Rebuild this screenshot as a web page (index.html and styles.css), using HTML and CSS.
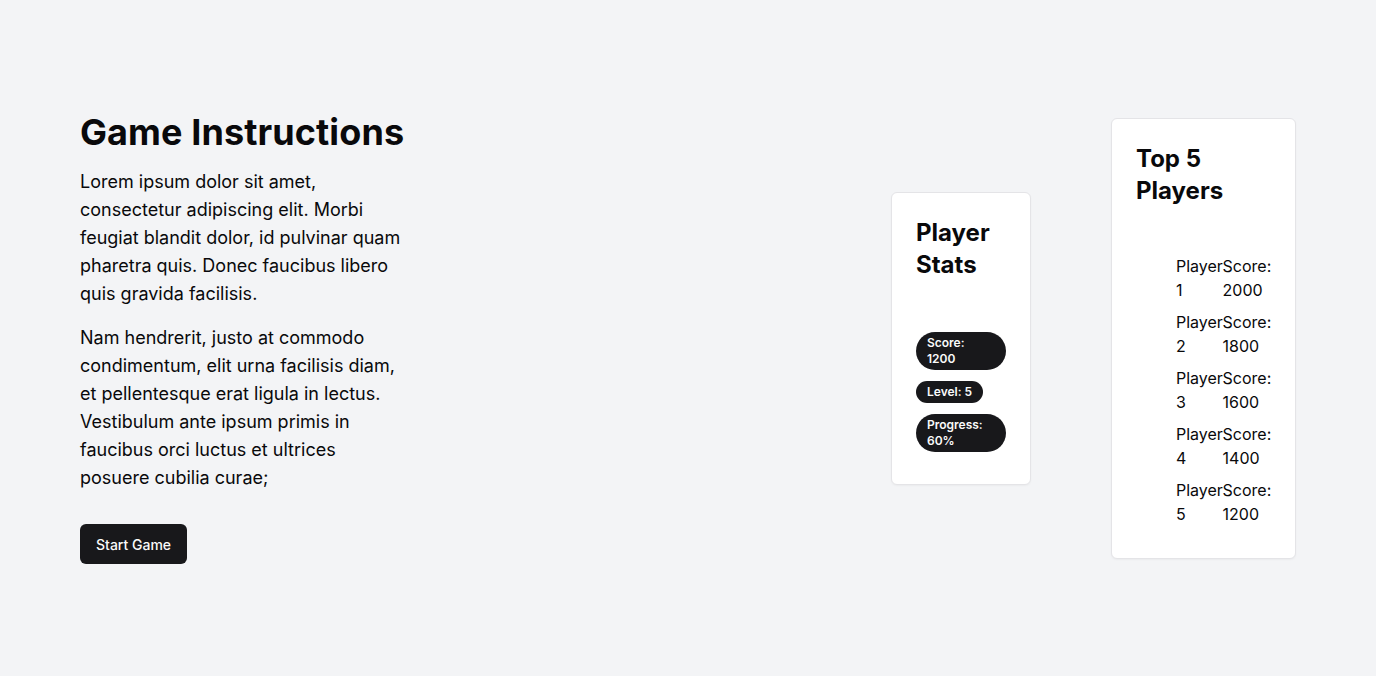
FILE: index.html
```html
<!DOCTYPE html>
<html lang="en">
<head>
<meta charset="utf-8">
<title>Game</title>
<link rel="stylesheet" href="styles.css">
</head>
<body>
<main class="page">
  <section class="intro">
    <h1 class="intro-title">Game Instructions</h1>
    <p class="intro-text">Lorem ipsum dolor sit amet, consectetur adipiscing elit. Morbi feugiat blandit dolor, id pulvinar quam pharetra quis. Donec faucibus libero quis gravida facilisis.</p>
    <p class="intro-text">Nam hendrerit, justo at commodo condimentum, elit urna facilisis diam, et pellentesque erat ligula in lectus. Vestibulum ante ipsum primis in faucibus orci luctus et ultrices posuere cubilia curae;</p>
    <button class="btn">Start Game</button>
  </section>
  <div class="side">
    <section class="card stats-card">
      <h2 class="card-title">Player Stats</h2>
      <div class="badges">
        <span class="badge">Score: 1200</span>
        <span class="badge">Level: 5</span>
        <span class="badge">Progress: 60%</span>
      </div>
    </section>
    <section class="card top-card">
      <h2 class="card-title">Top 5 Players</h2>
      <ul class="players">
        <li class="player"><span>Player 1</span><span>Score: 2000</span></li>
        <li class="player"><span>Player 2</span><span>Score: 1800</span></li>
        <li class="player"><span>Player 3</span><span>Score: 1600</span></li>
        <li class="player"><span>Player 4</span><span>Score: 1400</span></li>
        <li class="player"><span>Player 5</span><span>Score: 1200</span></li>
      </ul>
    </section>
  </div>
</main>
</body>
</html>
```
FILE: styles.css
```css
* { box-sizing: border-box; }
html, body { margin: 0; padding: 0; }
body {
  background: #f3f4f6;
  color: #09090b;
  font-family: Inter, "Noto Sans", sans-serif;
}
.page {
  height: 676px;
  padding: 0 80px;
  display: flex;
  align-items: center;
  justify-content: space-between;
}
.intro {
  width: 326px;
}
.intro-title {
  margin: 0 0 16px;
  font-size: 36px;
  line-height: 40px;
  font-weight: 700;
  white-space: nowrap;
  letter-spacing: 0.1px;
}
.intro-text {
  margin: 0 0 16px;
  font-size: 18px;
  line-height: 28px;
}
.intro-text + .intro-text { margin-bottom: 0; }
.btn {
  margin-top: 32px;
  height: 40px;
  padding: 0 16px;
  border: none;
  border-radius: 6px;
  background: #18181b;
  color: #fafafa;
  font-family: inherit;
  font-size: 14px;
  font-weight: 500;
}
.side {
  display: flex;
  align-items: center;
  gap: 80px;
}
.card {
  background: #fff;
  border: 1px solid #e4e4e7;
  border-radius: 6px;
  padding: 24px;
  box-shadow: 0 1px 2px rgba(0,0,0,0.04);
}
.card-title {
  margin: 0;
  font-size: 24px;
  line-height: 32px;
  font-weight: 700;
}
.stats-card { width: 140px; }
.badges {
  margin: 51px 0 8px;
  display: flex;
  flex-direction: column;
  align-items: flex-start;
  gap: 11px;
}
.badge {
  display: inline-block;
  background: #18181b;
  color: #fafafa;
  border: 1px solid transparent;
  border-radius: 999px;
  padding: 2px 10px;
  font-size: 12px;
  line-height: 16px;
  font-weight: 600;
}
.badges .badge:first-child,
.badges .badge:last-child { width: 100%; }
.top-card { width: 185px; }
.players {
  list-style: none;
  margin: 47px 0 8px;
  padding: 0 0 0 40px;
  display: flex;
  flex-direction: column;
  gap: 8px;
}
.player {
  display: flex;
  justify-content: space-between;
  font-size: 16px;
  line-height: 24px;
}
.player span { min-width: 0; width: min-content; }
```
